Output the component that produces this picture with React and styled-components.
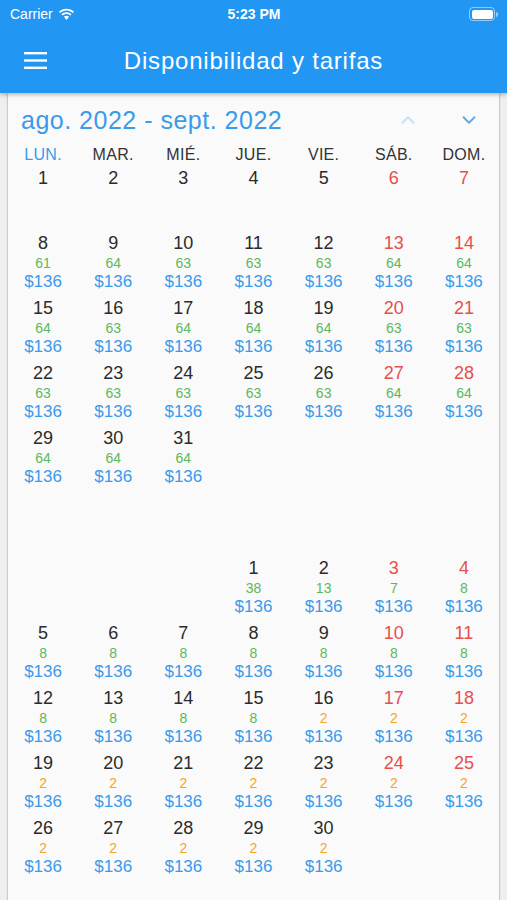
import React from 'react';
import styled, { createGlobalStyle } from 'styled-components';
import { ChevronUp, ChevronDown } from 'lucide-react';

const GlobalStyle = createGlobalStyle`
  html, body {
    margin: 0;
    padding: 0;
    background: #efefef;
    font-family: "Liberation Sans", Arial, sans-serif;
  }
`;

const Screen = styled.div`
  width: 507px;
  height: 900px;
  overflow: hidden;
  background: #efefef;
`;

const Header = styled.div`
  background: #2196f3;
  color: #fff;
  box-shadow: 0 2px 4px rgba(0, 0, 0, 0.25);
  position: relative;
  z-index: 2;
`;

const StatusBar = styled.div`
  height: 28px;
  display: grid;
  grid-template-columns: 1fr auto 1fr;
  align-items: center;
  padding: 0 9px 0 10px;
  font-size: 14px;
`;

const Carrier = styled.div`
  display: flex;
  align-items: center;
  gap: 5px;
`;

const Time = styled.div`
  font-weight: bold;
`;

const Battery = styled.div`
  justify-self: end;
  display: flex;
  align-items: center;
`;

const BatteryBody = styled.div`
  width: 21px;
  height: 9px;
  border: 1.5px solid rgba(255, 255, 255, 0.5);
  border-radius: 4px;
  padding: 1.5px;
  display: flex;
  span {
    flex: 1;
    background: #fff;
    border-radius: 2px;
  }
`;

const BatteryTip = styled.div`
  width: 2px;
  height: 5px;
  margin-left: 1px;
  border-radius: 0 2px 2px 0;
  background: rgba(255, 255, 255, 0.5);
`;

const AppBar = styled.div`
  height: 65px;
  display: flex;
  align-items: center;
  position: relative;
`;

const MenuButton = styled.div`
  width: 70px;
  display: flex;
  justify-content: center;
`;

const Title = styled.div`
  position: absolute;
  left: 0;
  right: 0;
  text-align: center;
  font-size: 24px;
  letter-spacing: 0.8px;
  pointer-events: none;
`;

const Card = styled.div`
  margin: 0 8px;
  background: #fafafa;
  box-shadow: 0 0 2px rgba(0, 0, 0, 0.45);
  padding-top: 12px;
  min-height: 900px;
`;

const MonthBar = styled.div`
  height: 30px;
  display: flex;
  align-items: center;
  padding-left: 13px;
`;

const MonthTitle = styled.div`
  flex: 1;
  font-size: 25px;
  letter-spacing: 0.5px;
  color: #3a9bea;
`;

const NavButton = styled.div`
  width: 61px;
  display: flex;
  justify-content: center;
  color: ${p => (p.faded ? '#c3e0f8' : '#5ba9ea')};
`;

const WeekHeader = styled.div`
  display: grid;
  grid-template-columns: repeat(7, 1fr);
  margin-top: 9px;
  height: 22px;
  align-items: center;
`;

const WeekDay = styled.div`
  text-align: center;
  font-size: 16px;
  letter-spacing: 0.3px;
  color: ${p => (p.active ? '#3a9bea' : '#333')};
`;

const Grid = styled.div`
  display: grid;
  grid-template-columns: repeat(7, 1fr);
  grid-auto-rows: 65px;
  margin-top: 2px;
`;

const Cell = styled.div`
  display: flex;
  flex-direction: column;
  align-items: center;
`;

const DayNum = styled.div`
  font-size: 18px;
  line-height: 21px;
  color: ${p => (p.weekend ? '#e5504d' : '#2b2b2b')};
`;

const Avail = styled.div`
  font-size: 14px;
  line-height: 19px;
  color: ${p => (p.low ? '#f5a623' : '#5cb85c')};
`;

const Price = styled.div`
  font-size: 17px;
  line-height: 18px;
  color: #3a9bea;
`;

const weekdays = ['LUN.', 'MAR.', 'MIÉ.', 'JUE.', 'VIE.', 'SÁB.', 'DOM.'];

const august = [
  null, null, null, null, null, null, null,
  61, 64, 63, 63, 63, 64, 64,
  64, 63, 64, 64, 64, 63, 63,
  63, 63, 63, 63, 63, 64, 64,
  64, 64, 64,
];

const september = [
  38, 13, 7, 8,
  8, 8, 8, 8, 8, 8, 8,
  8, 8, 8, 8, 2, 2, 2,
  2, 2, 2, 2, 2, 2, 2,
  2, 2, 2, 2, 2,
];

function buildMonth(avail, offset) {
  const cells = [];
  for (let i = 0; i < offset; i += 1) cells.push(null);
  avail.forEach((a, i) => cells.push({ day: i + 1, avail: a }));
  while (cells.length < 42) cells.push(null);
  return cells;
}

const cells = [...buildMonth(august, 0), ...buildMonth(september, 3)];

function Wifi() {
  return (
    <svg width="17" height="13" viewBox="0 0 17 13" fill="#fff">
      <path d="M8.5 2.6c2.4 0 4.6.9 6.3 2.5l1.3-1.3C14.1 1.8 11.4.7 8.5.7S2.9 1.8.9 3.8l1.3 1.3C3.9 3.5 6.1 2.6 8.5 2.6z" />
      <path d="M8.5 6.1c1.5 0 2.8.5 3.8 1.5l1.3-1.3C12.3 5 10.5 4.2 8.5 4.2S4.7 5 3.4 6.3l1.3 1.3c1-1 2.3-1.5 3.8-1.5z" />
      <path d="M8.5 9.5c.6 0 1.1.2 1.5.6L8.5 11.8 7 10.1c.4-.4.9-.6 1.5-.6z" />
      <path d="M8.5 7.7c1 0 1.9.4 2.6 1L8.5 11.8 5.9 8.7c.7-.6 1.6-1 2.6-1z" />
    </svg>
  );
}

function Hamburger() {
  return (
    <svg width="23" height="17" viewBox="0 0 23 17">
      <rect x="0" y="0" width="23" height="2.4" fill="#fff" />
      <rect x="0" y="7.3" width="23" height="2.4" fill="#fff" />
      <rect x="0" y="14.6" width="23" height="2.4" fill="#fff" />
    </svg>
  );
}

export default function App() {
  return (
    <Screen>
      <GlobalStyle />
      <Header>
        <StatusBar>
          <Carrier>
            Carrier
            <Wifi />
          </Carrier>
          <Time>5:23 PM</Time>
          <Battery>
            <BatteryBody><span /></BatteryBody>
            <BatteryTip />
          </Battery>
        </StatusBar>
        <AppBar>
          <MenuButton><Hamburger /></MenuButton>
          <Title>Disponibilidad y tarifas</Title>
        </AppBar>
      </Header>
      <Card>
        <MonthBar>
          <MonthTitle>ago. 2022 - sept. 2022</MonthTitle>
          <NavButton faded><ChevronUp size={22} strokeWidth={2} /></NavButton>
          <NavButton><ChevronDown size={22} strokeWidth={2} /></NavButton>
        </MonthBar>
        <WeekHeader>
          {weekdays.map((w, i) => (
            <WeekDay key={w} active={i === 0}>{w}</WeekDay>
          ))}
        </WeekHeader>
        <Grid>
          {cells.map((c, i) => {
            const col = i % 7;
            if (!c) return <Cell key={i} />;
            return (
              <Cell key={i}>
                <DayNum weekend={col >= 5}>{c.day}</DayNum>
                {c.avail !== null && (
                  <>
                    <Avail low={c.avail <= 2}>{c.avail}</Avail>
                    <Price>$136</Price>
                  </>
                )}
              </Cell>
            );
          })}
        </Grid>
      </Card>
    </Screen>
  );
}
